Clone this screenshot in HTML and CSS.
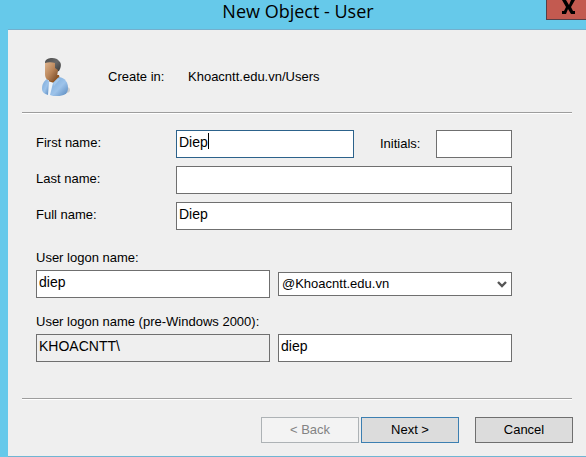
FILE: index.html
```html
<!DOCTYPE html>
<html lang="en">
<head>
<meta charset="utf-8">
<title>New Object - User</title>
<link rel="stylesheet" href="styles.css">
</head>
<body>
<main class="window">
  <header class="titlebar">
    <h1 class="title">New Object - User</h1>
    <button class="close" type="button" aria-label="Close">
      <svg width="13" height="14" viewBox="0 0 13 14"><path d="M0 0h4l3 5 2-5h4L9 7l2 4h2v3H9L6 9l-2 5H0v-3h2l2-4z"/></svg>
    </button>
  </header>
  <form class="panel">
    <div class="intro">
      <svg class="avatar" width="32" height="40" viewBox="0 0 32 40" aria-hidden="true">
        <defs>
          <linearGradient id="skin" x1="0" y1="0" x2="1" y2="1"><stop offset="0" stop-color="#dfb58f"/><stop offset=".5" stop-color="#b98559"/><stop offset="1" stop-color="#704321"/></linearGradient>
          <linearGradient id="shirt" x1="0" y1="0" x2="1" y2="1"><stop offset="0" stop-color="#79a9d9"/><stop offset=".55" stop-color="#9dc3ea"/><stop offset="1" stop-color="#5687bd"/></linearGradient>
          <linearGradient id="hair" x1="0" y1="0" x2="1" y2="1"><stop offset="0" stop-color="#4c4c4c"/><stop offset=".5" stop-color="#696969"/><stop offset="1" stop-color="#353535"/></linearGradient>
        </defs>
        <ellipse cx="26" cy="33" rx="4" ry="3" fill="#cccccc"/>
        <path d="M9 18h10l1 5-5 6-6-4z" fill="#925722"/>
        <path d="M8 24l6 2v13l-8-1z" fill="#edf3f9"/>
        <path d="M7 22l2 2-1 14c-4-1-6-3-6-6 0-5 2-8 5-10z" fill="url(#shirt)"/>
        <path d="M19 20c6 1 9 5 9 11 0 6-4 8-11 8-3 0-5 0-7-1l3-12z" fill="url(#shirt)"/>
        <path d="M13 26l5-5 2 1-6 7z" fill="#a3c8ec"/>
        <path d="M5 5c1-5 12-5 14-1 3 2 2 7 0 10l-3 1-2-7-9-1z" fill="url(#hair)"/>
        <path d="M5 6c3-1 7-1 10 0v5l3 2-1 7-4 4c-5 0-8-2-8-7z" fill="url(#skin)"/>
      </svg>
      <span class="intro-label">Create in:</span>
      <span>Khoacntt.edu.vn/Users</span>
    </div>
    <hr class="rule">
    <div class="fields">
      <div class="row">
        <label class="name" for="first">First name:</label>
        <div class="focused"><input id="first" class="box active" type="text" value="Diep"><span class="caret"></span></div>
        <label class="initials-label" for="initials">Initials:</label>
        <input id="initials" class="box initials" type="text">
      </div>
      <div class="row">
        <label class="name" for="last">Last name:</label>
        <input id="last" class="box" type="text">
      </div>
      <div class="row">
        <label class="name" for="full">Full name:</label>
        <input id="full" class="box" type="text" value="Diep">
      </div>
      <div class="logon">
        <label for="logon">User logon name:</label>
        <div class="pair">
          <input id="logon" class="box" type="text" value="diep">
          <div class="combo">
            <select class="select" aria-label="Domain"><option>@Khoacntt.edu.vn</option></select>
            <svg class="chevron" width="10" height="8" viewBox="0 0 10 8"><path d="M1 1l4 4 4-4" fill="none" stroke="#555" stroke-width="2.4"/></svg>
          </div>
        </div>
      </div>
      <div class="logon legacy">
        <label for="legacy">User logon name (pre-Windows 2000):</label>
        <div class="pair">
          <input class="box locked" type="text" value="KHOACNTT\" readonly aria-label="Domain prefix">
          <input id="legacy" class="box" type="text" value="diep">
        </div>
      </div>
    </div>
    <hr class="rule">
    <div class="actions">
      <button class="button" type="button" disabled>&lt; Back</button>
      <button class="button primary" type="button">Next &gt;</button>
      <button class="button cancel" type="button">Cancel</button>
    </div>
  </form>
</main>
</body>
</html>
```
FILE: styles.css
```css
* { box-sizing: border-box; }
body {
  margin: 0;
  background: #66c9ea;
  color: #000;
  font: 13px/16px "Liberation Sans", Arial, sans-serif;
}
input, select, button { font: inherit; color: inherit; border-radius: 0; margin: 0; }
.window { padding-left: 8px; }
.titlebar {
  position: relative;
  height: 29px;
}
.title {
  margin: 0;
  padding-left: 2px;
  text-align: center;
  font: 18px/22px "Open Sans", "Noto Sans", sans-serif;
}
.close {
  position: absolute;
  top: -1px;
  right: -1px;
  width: 41px;
  height: 21px;
  padding: 0 0 7px 3px;
  border: 1px solid #554048;
  background: #c35a50;
}
.close svg { display: block; margin: 0 auto; }
.panel {
  border-top: 1px solid #74afcd;
  border-bottom: 1px solid #70b5d3;
  background: #efefef;
}
.intro {
  display: flex;
  align-items: center;
  height: 82px;
  padding: 12px 32px 0;
}
.avatar { flex: none; margin-right: 36px; }
.intro-label { width: 80px; }
.rule {
  height: 2px;
  margin: 0 14px;
  border: 0;
  border-top: 1px solid #9d9d9d;
  background: #fff;
}
.fields {
  display: flex;
  flex-direction: column;
  gap: 8px;
  padding: 16px 74px 36px 28px;
}
.row { display: flex; align-items: center; }
.name { flex: none; width: 140px; padding-bottom: 2px; }
.box {
  flex: 1;
  width: 100%;
  min-width: 0;
  height: 28px;
  padding: 0 2px 5px;
  border: 1px solid #6f6f6f;
  background: #fff;
  font-size: 14px;
  outline: 0;
}
.active { display: block; border-color: #2c628b; }
.focused { position: relative; flex: 1; }
.caret {
  position: absolute;
  left: 32px;
  top: 3px;
  width: 1px;
  height: 16px;
  background: #000;
}
.initials-label { width: 82px; padding-left: 26px; }
.initials { flex: none; width: 76px; }
.logon { margin-top: 12px; }
.legacy { margin-top: 8px; }
.logon label { display: block; margin-bottom: 4px; }
.pair { display: grid; grid-template-columns: 1fr 1fr; align-items: center; gap: 8px; }
.combo { position: relative; }
.select {
  display: block;
  width: 100%;
  height: 24px;
  padding: 0 24px 0 3px;
  border: 1px solid #6f6f6f;
  background: #fff;
  appearance: none;
}
.chevron { position: absolute; right: 5px; top: 9px; pointer-events: none; }
.locked { background: #efefef; }
.actions {
  display: flex;
  justify-content: flex-end;
  gap: 2px;
  padding: 17px 13px 13px;
}
.button {
  width: 98px;
  height: 26px;
  padding: 0;
  border: 1px solid #6f6f6f;
  background: #dcdcdc;
}
.button:disabled { color: #838383; border-color: #adb2b5; background: #f3f3f3; }
.primary { border-color: #3c7fb1; }
.cancel { margin-left: 14px; }
```
